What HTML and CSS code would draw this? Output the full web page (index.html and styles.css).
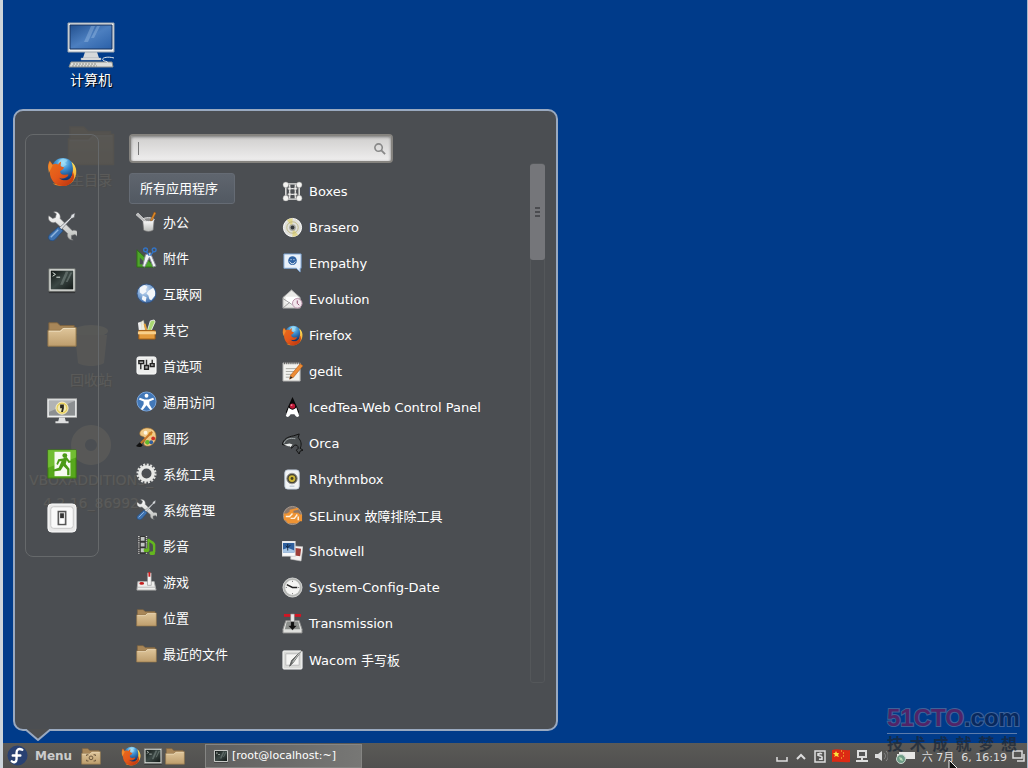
FILE: index.html
```
<!DOCTYPE html>
<html lang="zh-CN">
<head>
    <meta charset="UTF-8">
    <meta name="viewport" content="width=device-width, initial-scale=1.0">
    <title>Cinnamon 桌面</title>
    <link rel="stylesheet" href="styles.css">
</head>
<body>
    <!-- Shared icons -->
    <svg class="sprite" aria-hidden="true">
        <defs>
            <radialGradient id="g-globe" cx=".5" cy=".2" r=".8"><stop offset="0" stop-color="#9be0fa"/><stop offset=".4" stop-color="#3d8fd0"/><stop offset="1" stop-color="#0c2a66"/></radialGradient>
            <linearGradient id="g-fox" x1="0" y1="0" x2="1" y2="1"><stop offset="0" stop-color="#e8701c"/><stop offset=".5" stop-color="#e4581a"/><stop offset="1" stop-color="#b8300c"/></linearGradient>
            <linearGradient id="g-tail" x1="0" y1="0" x2="0" y2="1"><stop offset="0" stop-color="#ffe45c"/><stop offset="1" stop-color="#f08a1c"/></linearGradient>
            <linearGradient id="g-folder" x1="0" y1="0" x2="0" y2="1"><stop offset="0" stop-color="#e0c79c"/><stop offset="1" stop-color="#bd9d6c"/></linearGradient>
            <linearGradient id="g-term" x1="0" y1="0" x2="1" y2="1"><stop offset="0" stop-color="#101614"/><stop offset=".5" stop-color="#3c4845"/><stop offset="1" stop-color="#121816"/></linearGradient>
            <linearGradient id="g-screen" x1="0" y1="0" x2="1" y2="1"><stop offset="0" stop-color="#22508f"/><stop offset=".5" stop-color="#4c7fc0"/><stop offset="1" stop-color="#2a60a8"/></linearGradient>
            <linearGradient id="g-silver" x1="0" y1="0" x2="0" y2="1"><stop offset="0" stop-color="#ffffff"/><stop offset="1" stop-color="#b9bbb8"/></linearGradient>
            <radialGradient id="g-blue" cx=".4" cy=".3" r=".8"><stop offset="0" stop-color="#dce9f7"/><stop offset=".5" stop-color="#7da5d4"/><stop offset="1" stop-color="#2e5c9c"/></radialGradient>
        </defs>
        <symbol id="i-firefox" viewBox="0 0 32 32">
            <circle cx="17" cy="13" r="12" fill="url(#g-globe)"/>
            <path d="M14 3c3-2 7-1 8 1l-3 2 2 2-4 3-3-2-2-3z" fill="#a9e4f8" opacity=".55"/>
            <path d="M26 5c4 3 6 8 5 13-1 8-8 13-15 13-6 0-10-3-10-3 8 2 19-1 21-9 1-5 1-9-1-14z" fill="url(#g-tail)"/>
            <path d="M3 4l3 4c2-1 4-1 6 0 1-2 2-3 3-3 0 2-1 4 0 5l3 1c0 2-2 3-4 4 0 3 2 4 4 4s3-1 5 0c-2 4-7 5-10 3 3 4 11 4 13-1 1-2 1-4 1-6 4 7 1 12-5 15-10 4-19-4-19-14C0 12 1 7 3 4z" fill="url(#g-fox)"/>
            <path d="M3 5l3 4-4 8C1 13 1 9 3 5z" fill="#f5a33a" opacity=".6"/>
        </symbol>
        <symbol id="i-tools" viewBox="0 0 32 32">
            <path d="M2 5l4 3 3-1 1-4-3-2c4-1 8 2 7 7l13 13c4-2 8 2 6 7l-3-3-4 1v4l2 1c-5 0-7-4-6-7L9 12C5 14 0 10 2 5z" fill="url(#g-silver)" stroke="#77787a" stroke-width=".6"/>
            <path d="M30 2l-1 5-3 1-11 12-2-2L25 7l1-3z" fill="#dfe2e5" stroke="#55585c" stroke-width=".6"/>
            <path d="M12 17l5 4-8 9c-2 2-4 2-6 1s-2-4 0-6z" fill="#3e72b0" stroke="#234c80" stroke-width=".8"/>
            <path d="M12 20L4 28" stroke="#8fb5df" stroke-width="1.500"/>
        </symbol>
        <symbol id="i-terminal" viewBox="0 0 32 32">
            <path d="M2 29h28" stroke="#222" stroke-width="2" opacity=".6"/>
            <path d="M2 4h28v24H2z" fill="#e4e6e2" stroke="#6c6f6c"/>
            <path d="M4 6h24v20H4z" fill="url(#g-term)"/>
            <path d="M14 21l6-14h3l-6 14zM20 18l5-10h2l-5 10z" fill="#8c9995" opacity=".45"/>
            <path d="M6 8l3 2-3 2M10 13h4" stroke="#e6efe8" fill="none"/>
        </symbol>
        <symbol id="i-folder" viewBox="0 0 32 32">
            <path d="M2 4h9l3 3h15v8H2z" fill="#a88658" stroke="#7c6240"/>
            <path d="M1 12h13l3-3h14v20H1z" fill="url(#g-folder)" stroke="#927549"/>
            <path d="M2 13h12.500l3-3H30" fill="none" stroke="#efdfc0"/>
        </symbol>
        <symbol id="i-lock" viewBox="0 0 32 32">
            <path d="M0 4h32v20H0z" fill="#eceeee" stroke="#999"/>
            <path d="M2 6h28v16H2z" fill="#8c8f91"/>
            <path d="M2 6h28L2 18z" fill="#b1b3b4"/>
            <path d="M13 24h6l1 4h3v2H9v-2h3z" fill="#dfe0e0"/>
            <circle cx="16" cy="14" r="6.500" fill="#e7cf5c" stroke="#f7f1cf"/>
            <circle cx="16" cy="14" r="4.500" fill="#f0e8b4"/>
            <path d="M14 10h4v4l-1 4h-2l1-4h-2z" fill="#2c2a20"/>
        </symbol>
        <symbol id="i-exit" viewBox="0 0 32 32">
            <path d="M1 1h30v30H1z" fill="#57a81c" stroke="#3d7d10"/>
            <path d="M1 1h30v8L1 20z" fill="#7cc83c" opacity=".7"/>
            <path d="M8 3h17v26H8z" fill="#f6faf0"/>
            <circle cx="19" cy="7" r="2.600" fill="#4b9a16"/>
            <path d="M17 10l-5 1-2 5 1.500 1 2-4h2l-3 7-6 2v2l8-1 3-5 4 4v6h2.500v-7l-4-5 1-4 2 3 3-1v-1.500h-2l-3-4z" fill="#4b9a16"/>
        </symbol>
        <symbol id="i-switch" viewBox="0 0 32 32">
            <rect x="1" y="1" width="30" height="30" rx="4" fill="#e8e8e8" stroke="#fff"/>
            <rect x="4" y="4" width="24" height="23" rx="3" fill="#f9f9f9" stroke="#c5c5c5"/>
            <path d="M12 9h8v14h-8z" fill="#dcdcdc" stroke="#555" stroke-width="1.500"/>
            <path d="M14 11h4v5h-4z" fill="#333"/>
            <path d="M14 17h4v5h-4z" fill="#fff"/>
        </symbol>
        <symbol id="i-computer" viewBox="0 0 48 48">
            <path d="M18 31h12l2 6H16z" fill="#d5d8da"/>
            <path d="M14 37h20v2H14z" fill="#f0f0f0" stroke="#8b9298" stroke-width=".5"/>
            <path d="M1 2h46v29H1z" fill="#eef0f1" stroke="#9ba5ae"/>
            <path d="M3 4h42v24H3z" fill="url(#g-screen)" stroke="#16325e"/>
            <path d="M17 21L24 5h4l-7 16zM24 17l6-12h3l-6 12z" fill="#a9c8ea" opacity=".35"/>
            <path d="M4 41h41l1 5H2z" fill="#dddedb" stroke="#8d8f8b"/>
            <path d="M6 43h24M5 45h25" stroke="#8b8d88" stroke-dasharray="2 1"/>
            <path d="M47 37c-7-2-13 0-11 2s6 1 4 3" fill="none" stroke="#dfe5ea"/>
        </symbol>
        <symbol id="i-trash" viewBox="0 0 48 48">
            <ellipse cx="24" cy="10" rx="17" ry="6" fill="#cfd3cf"/>
            <path d="M8 14h32l-3 28c-5 4-21 4-26 0z" fill="#b7bbb7"/>
        </symbol>
        <symbol id="i-disc" viewBox="0 0 48 48">
            <path d="M24 4a20 20 0 1 0 .1 0zm0 14a6 6 0 1 1-.1 0z" fill="#d9dad6"/>
        </symbol>
    </svg>

    <div class="screen">
        <main class="desktop">
            <div class="desktop-icons">
                <a href="#" class="desktop-icon"><svg><use href="#i-computer"/></svg><span>计算机</span></a>
                <a href="#" class="desktop-icon"><svg><use href="#i-folder"/></svg><span>主目录</span></a>
                <a href="#" class="desktop-icon after-gap"><svg><use href="#i-trash"/></svg><span>回收站</span></a>
                <a href="#" class="desktop-icon"><svg><use href="#i-disc"/></svg><span>VBOXADDITIONS_<br>4.2.16_86992</span></a>
            </div>

            <section class="menu-popup">
                <nav class="favorites">
                    <button aria-label="Firefox"><svg><use href="#i-firefox"/></svg></button>
                    <button aria-label="系统设置"><svg><use href="#i-tools"/></svg></button>
                    <button aria-label="终端"><svg><use href="#i-terminal"/></svg></button>
                    <button aria-label="文件"><svg><use href="#i-folder"/></svg></button>
                    <button class="session" aria-label="锁定屏幕"><svg><use href="#i-lock"/></svg></button>
                    <button aria-label="注销"><svg><use href="#i-exit"/></svg></button>
                    <button aria-label="关机"><svg><use href="#i-switch"/></svg></button>
                </nav>

                <div class="menu-main">
                    <div class="search">
                        <span class="caret"></span>
                        <input type="text" id="search" aria-label="搜索">
                        <svg viewBox="0 0 14 14"><circle cx="6" cy="6" r="4" fill="none" stroke="#888" stroke-width="1.700"/><path d="M9 9l4 4" stroke="#888" stroke-width="2"/></svg>
                    </div>

                    <div class="menu-lists">
                        <div class="categories">
                            <button class="selected">所有应用程序</button>
                            <button>
                                <svg viewBox="0 0 22 22"><path d="M7 9l12 0-1 11c-3 2-7 2-10 0z" fill="url(#g-silver)" stroke="#777" stroke-width=".7"/><ellipse cx="13" cy="9" rx="6" ry="2" fill="#8c8c8c" stroke="#eee"/><path d="M10 10L2 2 0 4l8 7" fill="#bbb" stroke="#eee" stroke-width=".6"/><path d="M15 10l4-9 2 1-4 8z" fill="#e08b28" stroke="#8c4d12" stroke-width=".5"/></svg>
                                办公
                            </button>
                            <button>
                                <svg viewBox="0 0 22 22"><path d="M1 3v18h19z" fill="#4ea52a" stroke="#2d7013"/><path d="M4 11v7h7z" fill="#4b4e52"/><path d="M10 8l5-2 6 14-3 1-4-10-5 10-2-1z" fill="#f2f4f6" stroke="#889"/><circle cx="10" cy="3" r="2" fill="none" stroke="#3373c4" stroke-width="1.500"/><circle cx="19" cy="3" r="2" fill="none" stroke="#3373c4" stroke-width="1.500"/><path d="M11 5l3 4M18 5l-3 4" stroke="#3373c4" stroke-width="1.500"/></svg>
                                附件
                            </button>
                            <button>
                                <svg viewBox="0 0 22 22"><circle cx="11" cy="11" r="10" fill="url(#g-blue)" stroke="#34527c"/><path d="M4 5l5-3 3 2-2 3 1 2-4 3-3-2zM13 8l5-3 2 4 0 4-4 5-2-1-1-4-2-2zM7 13l4 2-1 5-4-3z" fill="#f3f6fa"/></svg>
                                互联网
                            </button>
                            <button>
                                <svg viewBox="0 0 22 22"><path d="M5 12V3l3-2 2 11z" fill="#f1edd8" stroke="#777" stroke-width=".5"/><path d="M12 12l3-10 4-1 1 2-4 9z" fill="#a9d873" stroke="#fff" stroke-width=".8"/><path d="M2 4l1 8h3L5 3z" fill="#eee"/><path d="M9 5l2 7" stroke="#e9a23b" stroke-width="2"/><path d="M3 12h17v9H3z" fill="#e39b3d" stroke="#a15c14"/><path d="M2 13h19v3H2z" fill="#f8d08c"/></svg>
                                其它
                            </button>
                            <button>
                                <svg viewBox="0 0 22 22"><rect x="1" y="2" width="20" height="18" rx="2" fill="#ecedec" stroke="#fff"/><path d="M5 7v8M11 5v9M17 5v7" stroke="#333" stroke-width="1.500"/><path d="M3 6h5v3H3zM9 11h4v4H9zM15 9h4v3h-4z" fill="#aaa" stroke="#222" stroke-width="1.500"/></svg>
                                首选项
                            </button>
                            <button>
                                <svg viewBox="0 0 22 22"><circle cx="11" cy="11" r="10" fill="#4278b8" stroke="#7ca7dc"/><circle cx="11" cy="5" r="2" fill="#fff"/><path d="M4 7l5 2h4l5-2 1 2-5 2 0 3 3 5-2 1-4-5-4 5-2-1 3-5v-3L3 9z" fill="#fff"/></svg>
                                通用访问
                            </button>
                            <button>
                                <svg viewBox="0 0 22 22"><path d="M6 3c5-4 15-2 15 7 0 8-8 12-12 9-3-3 3-5 0-8-2-2-5-1-5-4 0-2 1-3 2-4z" fill="#f0c987" stroke="#af7931" stroke-width=".7"/><circle cx="10" cy="6" r="2" fill="#fff6df"/><circle cx="15" cy="7" r="2" fill="#e4a219"/><circle cx="18" cy="12" r="2" fill="#cf2e23"/><circle cx="12" cy="16" r="2.500" fill="#63b82b"/><circle cx="16" cy="16" r="2" fill="#315f9f"/><path d="M5 17L17 5" stroke="#c87629" stroke-width="2"/><path d="M0 20l4-4 3 3c-2 3-5 2-7 1z" fill="#111"/></svg>
                                图形
                            </button>
                            <button>
                                <svg viewBox="0 0 22 22"><circle cx="11" cy="11" r="9" fill="none" stroke="#dedfdd" stroke-width="3" stroke-dasharray="2 1.530"/><circle cx="11" cy="11" r="7" fill="none" stroke="#e8e9e7" stroke-width="3.500"/></svg>
                                系统工具
                            </button>
                            <button>
                                <svg><use href="#i-tools"/></svg>
                                系统管理
                            </button>
                            <button>
                                <svg viewBox="0 0 22 22"><path d="M2 1h10v19H2z" fill="#333"/><path d="M3 1v19M11 1v19" stroke="#e6e6e6" stroke-width="1.500" stroke-dasharray="1 1"/><path d="M5 2h4v4H5zM5 8h4v4H5zM5 14h4v4H5z" fill="#c2c6c4"/><path d="M13 5c2 3 7 2 6 7v6" fill="none" stroke="#64b61f" stroke-width="2.500"/><path d="M13 4v12" stroke="#64b61f" stroke-width="2"/><ellipse cx="11" cy="16" rx="3" ry="2" fill="#64b61f"/><ellipse cx="17" cy="19" rx="3" ry="2" fill="#64b61f"/></svg>
                                影音
                            </button>
                            <button>
                                <svg viewBox="0 0 22 22"><path d="M2 11h17l2 9H1z" fill="#eeeeec" stroke="#aaa"/><path d="M2 17h18" stroke="#bbb"/><path d="M12 2h4v13h-4z" fill="#f3f3f3" stroke="#888" stroke-width=".6"/><path d="M13 1h2v5h-2z" fill="#cf2020"/><ellipse cx="6" cy="13" rx="2.500" ry="1.500" fill="#c41d1d"/></svg>
                                游戏
                            </button>
                            <button><svg><use href="#i-folder"/></svg>位置</button>
                            <button><svg><use href="#i-folder"/></svg>最近的文件</button>
                        </div>

                        <div class="apps">
                            <button>
                                <svg viewBox="0 0 22 22"><g fill="none" stroke="#e8e8e6" stroke-width="1.500"><path d="M4 3h14M4 19h14M4 5v12M18 5v12M6 8h10M6 14h10M8 4v14M14 4v14"/></g><g fill="#f3f3f1" stroke="#888" stroke-width=".5"><circle cx="4" cy="4" r="3"/><circle cx="18" cy="4" r="3"/><circle cx="4" cy="18" r="3"/><circle cx="18" cy="18" r="3"/><circle cx="8" cy="8" r="1.500"/><circle cx="14" cy="8" r="1.500"/><circle cx="8" cy="14" r="1.500"/><circle cx="14" cy="14" r="1.500"/></g></svg>
                                Boxes
                            </button>
                            <button>
                                <svg viewBox="0 0 22 22"><circle cx="11" cy="11" r="9.500" fill="#dfdfda" stroke="#fff"/><path d="M11 11L5 3l6-2zM11 11l6 8-6 2z" fill="#ded27a" opacity=".8"/><circle cx="11" cy="11" r="6" fill="none" stroke="#b5ad73" stroke-width=".8"/><circle cx="11" cy="11" r="3.500" fill="#a5a69e"/><circle cx="11" cy="11" r="2" fill="#34373a"/></svg>
                                Brasero
                            </button>
                            <button>
                                <svg viewBox="0 0 22 22"><path d="M2 1h18v15h-1v4l-4-4H2z" fill="#e9f1fa" stroke="#7ba4d4"/><circle cx="11" cy="8" r="4.500" fill="#2e62a2"/><path d="M9 7h1M12 7h1M8 9c2 3 4 3 6 0" fill="none" stroke="#fff"/></svg>
                                Empathy
                            </button>
                            <button>
                                <svg viewBox="0 0 22 22"><path d="M1 9l9-8 9 8v11H1z" fill="#eaeae7" stroke="#aaa"/><path d="M4 8h12v6l-6 3-6-3z" fill="#fff"/><path d="M1 10l9 6 9-6M1 20l7-6" fill="none" stroke="#999"/><circle cx="16" cy="15" r="5" fill="#f2e6ec" stroke="#b991a9"/><path d="M16 12v3l2 2" fill="none" stroke="#8f4c6b"/></svg>
                                Evolution
                            </button>
                            <button><svg><use href="#i-firefox"/></svg>Firefox</button>
                            <button>
                                <svg viewBox="0 0 22 22"><path d="M1 2h18l0 19H1z" fill="#f2f2ee" stroke="#aaa"/><path d="M2 2h17" stroke="#555" stroke-width="3" stroke-dasharray="1 1"/><path d="M4 8h12M4 11h11M4 14h9M4 17h8" stroke="#a9a9a3"/><path d="M19 3l3 2-10 12-4 2 1-4z" fill="#ee8c34" stroke="#a5561a" stroke-width=".6"/><path d="M8 19l1-3 2 1z" fill="#222"/></svg>
                                gedit
                            </button>
                            <button>
                                <svg viewBox="0 0 22 22"><path d="M11 0c2 4 3 7 5 11l2 5-2 1H6l-2-1 2-5c2-4 3-7 5-11z" fill="#080808"/><path d="M7 11c3 3 5 3 8 0l3 9c-2 2-4 0-5-2h-4c-1 2-3 4-5 2z" fill="#fff"/><circle cx="11" cy="9.500" r="2.800" fill="#bd1735"/><circle cx="10" cy="8.500" r="1" fill="#f18a9d"/></svg>
                                IcedTea-Web Control Panel
                            </button>
                            <button>
                                <svg viewBox="0 0 22 22"><path d="M0 12C2 6 6 4 12 3l6-2-1 4c3 3 4 7 2 11l3 2-3 1-1 3-3-4 2-2c0-3-2-4-4-3l-3 3-1-3c-3 0-5 0-9-1z" fill="#4a4e50" stroke="#111"/><path d="M2 11c2-5 6-6 12-5" stroke="#a4aaac" fill="none"/><path d="M2 12l6-1 3 1-2 3-1-1c-2 0-4-1-6-2z" fill="#eceeed"/></svg>
                                Orca
                            </button>
                            <button>
                                <svg viewBox="0 0 22 22"><rect x="3" y="1" width="15" height="20" rx="3" fill="#f2f4f5" stroke="#c6d3e2"/><circle cx="10.500" cy="10" r="5.500" fill="#474535" stroke="#999"/><circle cx="10.500" cy="10" r="3.500" fill="#cdb637"/><circle cx="10.500" cy="10" r="1.500" fill="#47401a"/><path d="M8 18h5" stroke="#abc"/></svg>
                                Rhythmbox
                            </button>
                            <button>
                                <svg viewBox="0 0 22 22"><circle cx="11" cy="11" r="9.500" fill="#8b7769" stroke="#a99a8f"/><path d="M2 9h3l3-2V5l9-2v2l-5 1v2h5l2 2h2v7h-3l-2 2H6l-2-3H2z" fill="#ee9333"/><path d="M4 12h4l3-3M9 14h4l3-4M17 12v4" fill="none" stroke="#fff2df" stroke-width="1.500"/></svg>
                                SELinux 故障排除工具
                            </button>
                            <button>
                                <svg viewBox="0 0 22 22"><path d="M10 5l12 1-2 15-11-2z" fill="#f3f1f0" stroke="#bbb" stroke-width=".6"/><path d="M12 7l8 1-1 8-7-1z" fill="#9e3e38"/><path d="M0 0h14v16H0z" fill="#fafafa" stroke="#bbb" stroke-width=".6"/><path d="M1 2h12v10H1z" fill="#2e5f9d"/><path d="M1 9l5-2 7 3v2H1z" fill="#a7c6e5"/><path d="M6 3v7M4 5l2 2 3-3" stroke="#14263e" fill="none"/></svg>
                                Shotwell
                            </button>
                            <button>
                                <svg viewBox="0 0 22 22"><circle cx="11" cy="11" r="9" fill="#f5f5f3" stroke="#b6b8b5" stroke-width="2.500"/><circle cx="11" cy="11" r="10" fill="none" stroke="#ddd" stroke-width=".7"/><path d="M5 8l6 3 5 0" fill="none" stroke="#222" stroke-width="1.500"/><path d="M11 4v1M11 17v1M4 11h1M17 11h1" stroke="#666"/></svg>
                                System-Config-Date
                            </button>
                            <button>
                                <svg viewBox="0 0 22 22"><path d="M4 8h14l3 9v4H1v-4z" fill="#dedfdc" stroke="#888"/><path d="M5 9h12l2 8H3z" fill="#8b8e8b"/><path d="M2 1h18v3H2z" fill="#d01624"/><path d="M9 1h4v9H9z" fill="#e9e9e9" stroke="#777" stroke-width=".6"/><path d="M9 9h4v4h3l-5 5-5-5h3z" fill="#111" stroke="#ccc" stroke-width=".4"/></svg>
                                Transmission
                            </button>
                            <button>
                                <svg viewBox="0 0 22 22"><rect x="1" y="2" width="20" height="19" rx="1" fill="#d9dad7" stroke="#fff"/><path d="M4 5h14v12H4z" fill="#f5f5f3" stroke="#bbb"/><path d="M21 1l-9 13-4 4 2-6z" fill="#686c6a" stroke="#333" stroke-width=".6"/><path d="M20 2L11 14" stroke="#d0d3d0"/></svg>
                                Wacom 手写板
                            </button>
                        </div>
                        <div class="scrollbar"><div class="thumb"></div></div>
                    </div>
                </div>
                <svg class="tail" viewBox="0 0 26 12"><path d="M1 0L13 11 25 0z" fill="#4e4f50"/><path d="M0 0L13 11 26 0" fill="none" stroke="#99a9c0" stroke-width="2"/></svg>
            </section>
        </main>

        <footer class="panel">
            <button class="menu-button">
                <svg viewBox="0 0 22 22"><circle cx="11" cy="11" r="10.500" fill="#294172"/><path d="M16 5c-4-2-6 0-6 3v7c0 3-3 4-5 2M6 11h8" fill="none" stroke="#fff" stroke-width="2.500" stroke-linecap="round"/></svg>
                Menu
            </button>
            <button class="launcher show-desktop" aria-label="显示桌面">
                <svg viewBox="0 0 32 32"><use href="#i-folder"/><path d="M9 16v-2h3M20 14h3v2M9 22v2h3M20 24h3v-2" fill="none" stroke="#66523a" stroke-width="1.500"/><circle cx="16" cy="19" r="3" fill="none" stroke="#66523a" stroke-width="1.500"/></svg>
            </button>
            <button class="launcher" aria-label="Firefox"><svg><use href="#i-firefox"/></svg></button>
            <button class="launcher" aria-label="终端"><svg><use href="#i-terminal"/></svg></button>
            <button class="launcher" aria-label="文件"><svg><use href="#i-folder"/></svg></button>
            <button class="window-button"><svg><use href="#i-terminal"/></svg>[root@localhost:~]</button>

            <div class="tray">
                <svg viewBox="0 0 14 14"><path d="M2 8v4h10V8" fill="none" stroke="#ddd" stroke-width="1.500"/></svg>
                <svg viewBox="0 0 14 14"><path d="M3 10l4-4 4 4" fill="none" stroke="#ddd" stroke-width="2"/></svg>
                <svg viewBox="0 0 14 14"><path d="M2 2h10v11H2z" fill="none" stroke="#ddd" stroke-width="1.500"/><path d="M9 5c-3-2-5 2-2 2s3 4-1 3M5 4v3M9 8v3" fill="none" stroke="#ddd" stroke-width="1.500"/></svg>
                <svg class="flag" viewBox="0 0 18 14"><path d="M0 1c6-2 12 1 18 0v12c-6 1-12-1-18 0z" fill="#dd2a14"/><path d="M4 2l1 2h2L6 6l1 2-3-1-2 1 1-2-2-2h2z" fill="#fce23c"/><path d="M9 2h1M11 4h1M11 7h1M9 9h1" stroke="#fce23c"/></svg>
                <svg viewBox="0 0 14 14"><path d="M3 2h8v6H3z" fill="#555" stroke="#ddd" stroke-width="2"/><path d="M7 8v3M1 12h12" stroke="#ddd" stroke-width="2"/></svg>
                <svg viewBox="0 0 14 14"><path d="M1 5h3l4-3v10L4 9H1z" fill="#ddd"/><path d="M10 4c2 2 2 4 0 6M12 2c3 3 3 7 0 10" fill="none" stroke="#888"/></svg>
                <svg class="battery" viewBox="0 0 24 16"><path d="M6 4h16v7H6zM4 6h2v3H4z" fill="#e7e7e5"/><circle cx="8" cy="11" r="4.500" fill="#6e9c86" stroke="#c8d6cf"/><path d="M6 9l3 1 1 3-3-1z" fill="#b9dbb8"/></svg>
                <time>六 7月&nbsp; 6, 16:19</time>
                <svg viewBox="0 0 14 14"><path d="M1 2h9v7H1z" fill="none" stroke="#ddd" stroke-width="1.500"/><path d="M12 5v7H5" fill="none" stroke="#ddd" stroke-width="1.500"/></svg>
            </div>
        </footer>

        <div class="watermark">
            <div class="brand"><span>51CTO</span>.com</div>
            <div class="slogan">技术成就梦想</div>
        </div>
        <svg class="pointer" viewBox="0 0 10 14"><path d="M1 0v11l3-2 2 5 2-1-2-4h4z" fill="#111" stroke="#eee"/></svg>
    </div>
</body>
</html>
```
FILE: styles.css
```
* {
    box-sizing: border-box;
    margin: 0;
    padding: 0;
}

body {
    font-family: "DejaVu Sans", "Noto Sans CJK SC", sans-serif;
    font-size: 13px;
    color: #fff;
}

button {
    font: inherit;
    color: inherit;
    background: none;
    border: none;
    cursor: pointer;
}

svg {
    display: block;
    flex: none;
}

.sprite {
    position: absolute;
    width: 0;
    height: 0;
}

.screen {
    position: relative;
    display: flex;
    flex-direction: column;
    min-height: 100vh;
    background-color: #003b8a;
    border-left: 3px solid #ccd4da;
    border-right: 1px solid #aab8c8;
    overflow: hidden;
}

/* Desktop */
.desktop {
    position: relative;
    flex: 1;
}

.desktop-icons {
    width: 176px;
    padding-top: 21px;
}

.desktop-icon {
    display: flex;
    flex-direction: column;
    align-items: center;
    height: 100px;
    color: #fff;
    font-size: 14px;
    line-height: 23px;
    text-align: center;
    text-decoration: none;
    text-shadow: 1px 1px 1px #000;
}

.desktop-icon.after-gap {
    margin-top: 100px;
}

.desktop-icon svg {
    width: 48px;
    height: 48px;
}

/* Menu */
.menu-popup {
    position: absolute;
    left: 10px;
    bottom: 12px;
    display: flex;
    align-items: flex-start;
    gap: 30px;
    width: 545px;
    padding: 23px 11px 46px 10px;
    background-color: rgba(80, 80, 79, 0.94);
    border: 2px solid #99a9c0;
    border-radius: 10px;
}

.tail {
    position: absolute;
    left: 10px;
    top: 100%;
    width: 26px;
    height: 12px;
}

.favorites {
    display: flex;
    flex-direction: column;
    width: 74px;
    padding: 10px 0 11px;
    border: 1px solid #66696b;
    border-radius: 8px;
}

.favorites button {
    display: flex;
    align-items: center;
    justify-content: center;
    height: 54px;
}

.favorites .session {
    margin-top: 22px;
}

.favorites svg {
    width: 30px;
    height: 30px;
}

.menu-main {
    flex: 1;
}

.search {
    position: relative;
    display: flex;
    align-items: center;
    width: 264px;
    height: 29px;
    padding-right: 5px;
    background: linear-gradient(#cfcecd, #efeeee);
    border: 2px solid #85837f;
    border-radius: 4px;
    box-shadow: inset 0 1px 3px #777;
}

.search input {
    flex: 1;
    height: 100%;
    padding-left: 8px;
    font: inherit;
    background: none;
    border: none;
    outline: none;
}

.search svg {
    width: 13px;
    height: 13px;
}

.caret {
    position: absolute;
    left: 7px;
    width: 1px;
    height: 13px;
    background-color: #777;
}

.menu-lists {
    display: flex;
    align-items: stretch;
    height: 520px;
}

.categories {
    width: 153px;
    padding-top: 10px;
}

.categories button,
.apps button {
    display: flex;
    align-items: center;
    gap: 6px;
    height: 36px;
    white-space: nowrap;
}

.categories button {
    padding: 0 0 2px 7px;
}

.categories .selected {
    width: 106px;
    height: 31px;
    padding-left: 10px;
    background: linear-gradient(#5f656e, #525962);
    border: 1px solid #656b74;
    border-radius: 3px;
}

.apps {
    flex: 1;
    padding-top: 10px;
}

.categories svg,
.apps svg {
    width: 21px;
    height: 21px;
}

.scrollbar {
    width: 15px;
    border: 1px solid #54575a;
    border-radius: 3px;
}

.thumb {
    display: flex;
    align-items: center;
    justify-content: center;
    height: 96px;
    margin: 0 -1px;
    background-color: #75767a;
    border-radius: 3px;
}

.thumb::after {
    content: "";
    width: 5px;
    height: 10px;
    background: repeating-linear-gradient(#4b4c50 0 2px, #75767a 2px 4px);
}

/* Panel */
.panel {
    display: flex;
    align-items: center;
    height: 25px;
    padding-left: 4px;
    background: linear-gradient(#5b5a57, #50504f);
}

.menu-button {
    display: flex;
    align-items: center;
    gap: 7px;
    width: 74px;
    color: #ccc;
    font-size: 12px;
    font-weight: bold;
}

.menu-button svg {
    width: 21px;
    height: 21px;
}

.launcher {
    width: 22px;
}

.launcher svg {
    width: 20px;
    height: 20px;
}

.show-desktop {
    margin-right: 18px;
}

.window-button {
    display: flex;
    align-items: center;
    gap: 3px;
    width: 157px;
    height: 24px;
    margin-left: 18px;
    padding-left: 7px;
    font-size: 11px;
    background: linear-gradient(90deg, #60605f, #777775);
    border: 1px solid #858583;
}

.window-button svg {
    width: 16px;
    height: 16px;
}

.tray {
    display: flex;
    align-items: center;
    gap: 5px;
    margin-left: auto;
    padding-right: 1px;
    color: #ddd;
    font-size: 11px;
    white-space: nowrap;
}

.tray svg {
    width: 14px;
    height: 14px;
}

.tray .flag {
    width: 18px;
}

.tray .battery {
    width: 24px;
    height: 16px;
}

/* Logo printed over the corner of the screen */
.watermark {
    position: absolute;
    right: 10px;
    bottom: 12px;
    width: 130px;
    text-align: center;
    opacity: 0.75;
    pointer-events: none;
}

.brand {
    color: #0b2450;
    font-family: "Liberation Sans", sans-serif;
    font-size: 24px;
    font-weight: bold;
    line-height: 30px;
    border-bottom: 1px solid #7d92b8;
    -webkit-text-stroke: 2px #53719f;
    paint-order: stroke;
}

.brand span {
    color: #6b1d5e;
}

.slogan {
    color: #1d2836;
    font-size: 16px;
    font-weight: bold;
    line-height: 22px;
    text-align: justify;
    text-align-last: justify;
}

.pointer {
    position: absolute;
    right: 69px;
    bottom: -6px;
    width: 10px;
    height: 14px;
}
```
